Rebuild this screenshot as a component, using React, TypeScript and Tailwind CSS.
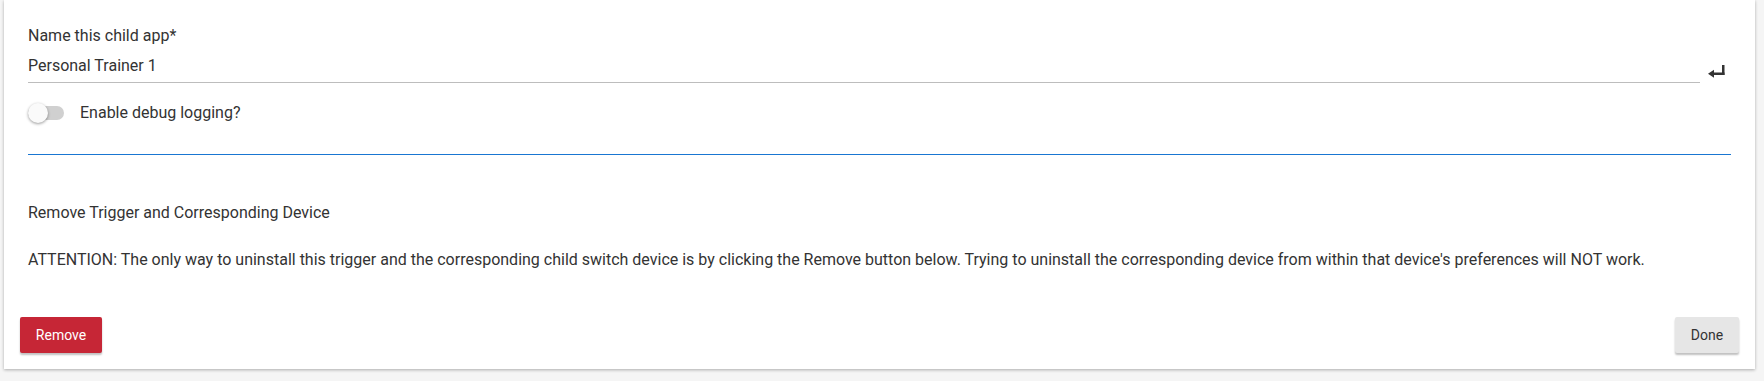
import { useState } from "react";

const ReturnIcon = () => (
  <svg width="20" height="16" viewBox="0 0 20 16" fill="#333">
    <rect x="16" y="3" width="2.5" height="10" />
    <rect x="6" y="10.5" width="12.5" height="2.5" />
    <polygon points="2,11.75 8,7.75 8,15.75" />
  </svg>
);

const App = () => {
  const [debug, setDebug] = useState(false);
  const [name, setName] = useState("Personal Trainer 1");

  return (
    <div
      className="h-[381px] bg-[#f5f5f5] text-[#333]"
      style={{ fontFamily: "Roboto, 'Noto Sans', sans-serif" }}
    >
      <div className="ml-1 w-[1751px] h-[369px] bg-white shadow-[0_1px_3px_rgba(0,0,0,0.3)] px-6 pt-6 flex flex-col">
        <label className="text-[16px] leading-6">Name this child app*</label>
        <div className="mt-[6px] flex items-start">
          <div className="flex-1 border-b border-[#bdbdbd] pb-1">
            <input
              value={name}
              onChange={(e) => setName(e.target.value)}
              className="w-full text-[16px] leading-6 h-6 outline-none bg-transparent text-[#333]"
            />
          </div>
          <div className="w-[31px] pl-[6px] pt-[8px]">
            <ReturnIcon />
          </div>
        </div>

        <div className="mt-[18px] flex items-center h-6">
          <button
            onClick={() => setDebug(!debug)}
            className="relative w-9 h-6 flex items-center"
          >
            <span
              className={
                debug
                  ? "w-9 h-[14px] rounded-full bg-[#90caf9]"
                  : "w-9 h-[14px] rounded-full bg-[#d0d0d0]"
              }
            />
            <span
              className={
                debug
                  ? "absolute left-4 top-[2px] w-5 h-5 rounded-full bg-[#1976d2] shadow-[0_1px_3px_rgba(0,0,0,0.4)]"
                  : "absolute left-0 top-[2px] w-5 h-5 rounded-full bg-[#fafafa] shadow-[0_1px_3px_rgba(0,0,0,0.4)]"
              }
            />
          </button>
          <span className="ml-4 text-[16px] leading-6">Enable debug logging?</span>
        </div>

        <div className="mt-[29px] border-b border-[#1976d2]" />

        <p className="mt-[46px] text-[16px] leading-6">
          Remove Trigger and Corresponding Device
        </p>
        <p className="mt-[23px] text-[16px] leading-6">
          ATTENTION: The only way to uninstall this trigger and the corresponding child switch device is by clicking the Remove button below. Trying to uninstall the corresponding device from within that device's preferences will NOT work.
        </p>

        <div className="mt-[45px] -mx-2 flex justify-between">
          <button className="h-9 w-[82px] rounded-[2px] bg-[#c62636] text-white text-[14px] shadow-[0_2px_2px_rgba(0,0,0,0.25)]">
            Remove
          </button>
          <button className="h-9 w-16 rounded-[2px] bg-[#e6e6e6] text-[#333] text-[14px] shadow-[0_2px_2px_rgba(0,0,0,0.25)]">
            Done
          </button>
        </div>
      </div>
    </div>
  );
};

export default App;
